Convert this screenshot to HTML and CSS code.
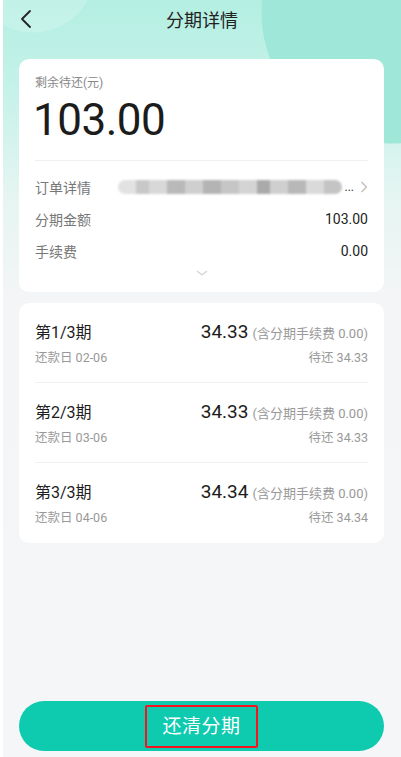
FILE: index.html
```html
<!DOCTYPE html>
<html lang="zh-CN">
<head>
  <meta charset="UTF-8" />
  <meta name="viewport" content="width=device-width, initial-scale=1.0" />
  <title>分期详情</title>
  <link rel="stylesheet" href="styles.css">
</head>
<body>
  <div class="app">
    <div class="header">
      <svg class="back" width="12" height="20" viewBox="0 0 12 20"><path d="M10 2 L2 10 L10 18" fill="none" stroke="#222" stroke-width="1.8" stroke-linecap="round" stroke-linejoin="round"/></svg>
      <h1>分期详情</h1>
    </div>

    <div class="card summary">
      <div class="label">剩余待还(元)</div>
      <div class="amount">103.00</div>
      <div class="divider"></div>
      <div class="row">
        <span class="key">订单详情</span>
        <span class="order">
          <span class="blur"></span>
          <span class="dots">...</span>
          <svg width="8" height="12" viewBox="0 0 8 12"><path d="M1.5 1 L6.5 6 L1.5 11" fill="none" stroke="#bbb" stroke-width="1.2"/></svg>
        </span>
      </div>
      <div class="row"><span class="key">分期金额</span><span class="val">103.00</span></div>
      <div class="row"><span class="key">手续费</span><span class="val">0.00</span></div>
      <div class="more">
        <svg width="14" height="8" viewBox="0 0 14 8"><path d="M2 2 L7 6 L12 2" fill="none" stroke="#d4d4d4" stroke-width="1.2"/></svg>
      </div>
    </div>

    <div class="card plan">
      <div class="term">
        <div class="term-line">
          <span class="term-name">第1/3期</span>
          <span><span class="term-amt">34.33</span> <span class="fee">(含分期手续费 0.00)</span></span>
        </div>
        <div class="term-line sub">
          <span>还款日 02-06</span>
          <span>待还 34.33</span>
        </div>
      </div>
      <div class="term">
        <div class="term-line">
          <span class="term-name">第2/3期</span>
          <span><span class="term-amt">34.33</span> <span class="fee">(含分期手续费 0.00)</span></span>
        </div>
        <div class="term-line sub">
          <span>还款日 03-06</span>
          <span>待还 34.33</span>
        </div>
      </div>
      <div class="term">
        <div class="term-line">
          <span class="term-name">第3/3期</span>
          <span><span class="term-amt">34.34</span> <span class="fee">(含分期手续费 0.00)</span></span>
        </div>
        <div class="term-line sub">
          <span>还款日 04-06</span>
          <span>待还 34.34</span>
        </div>
      </div>
    </div>

    <div class="footer">
      <button class="pay-btn"><span class="mark">还清分期</span></button>
    </div>
  </div>
</body>
</html>
```

FILE: styles.css
```css
body {
  margin: 0;
  background: #fff;
  font-family: Roboto, "Noto Sans CJK SC", "Noto Sans", sans-serif;
  color: #222;
}
.app {
  margin-left: 3px;
  min-height: 757px;
  display: flex;
  flex-direction: column;
  background:
    radial-gradient(circle at 30px -30px, rgba(255,255,255,0.18) 0 62px, transparent 63px),
    radial-gradient(circle at 390px 12px, #9fe8d9 0 131px, transparent 132px),
    linear-gradient(to bottom, #b4efe2 0, #c5f2e9 90px, #e6f5f2 200px, #f4f5f7 300px, #f5f6f8 100%);
}
.header {
  height: 38px;
  display: flex;
  align-items: center;
  justify-content: center;
  position: relative;
}
.header h1 {
  margin: 0;
  font-size: 18px;
  font-weight: 400;
  color: #222;
}
.back {
  position: absolute;
  left: 17px;
  top: 9px;
}
.card {
  background: #fff;
  border-radius: 10px;
  margin: 0 17px 0 16px;
  padding: 0 16px;
}
.summary {
  margin-top: 21px;
  padding-top: 16px;
  padding-bottom: 13px;
}
.label {
  font-size: 12px;
  line-height: 16px;
  color: #888;
}
.amount {
  font-size: 44px;
  line-height: 50px;
  margin-top: 4px;
  margin-left: -2px;
  color: #1c1c1c;
  letter-spacing: -0.5px;
}
.divider {
  height: 1px;
  background: #efefef;
  margin: 15px 0 10px;
}
.row {
  height: 32px;
  display: flex;
  align-items: center;
  justify-content: space-between;
  font-size: 14px;
}
.key {
  color: #777;
}
.val {
  color: #222;
}
.order {
  display: flex;
  align-items: center;
  gap: 3px;
}
.blur {
  width: 224px;
  height: 14px;
  border-radius: 7px;
  filter: blur(0.8px);
  background:
    linear-gradient(to right, #e2e2e2 0 8%, #c8c8c8 8% 14%, #d8d8d8 14% 22%, #b9b9b9 22% 30%, #cfcfcf 30% 38%, #b4b4b4 38% 46%, #c6c6c6 46% 54%, #d4d4d4 54% 62%, #aaaaaa 62% 68%, #cfcfcf 68% 76%, #b8b8b8 76% 84%, #dadada 84% 92%, #c4c4c4 92% 100%);
}
.dots {
  color: #333;
  font-size: 12px;
  margin-right: 3px;
}
.more {
  height: 12px;
  display: flex;
  justify-content: center;
  align-items: center;
}
.plan {
  margin-top: 11px;
}
.term {
  height: 80px;
  box-sizing: border-box;
  padding-top: 18px;
  border-bottom: 1px solid #f0f0f0;
}
.term:last-child {
  border-bottom: none;
}
.term-line {
  display: flex;
  justify-content: space-between;
  align-items: baseline;
  line-height: 22px;
}
.term-name {
  font-size: 16px;
  color: #1c1c1c;
}
.term-amt {
  font-size: 19px;
  color: #1c1c1c;
}
.fee {
  font-size: 13px;
  color: #999;
}
.sub {
  margin-top: 5px;
  line-height: 16px;
  font-size: 12.5px;
  color: #999;
}
.footer {
  margin-top: auto;
  padding: 0 17px 6px 16px;
}
.pay-btn {
  width: 100%;
  height: 50px;
  border: none;
  border-radius: 25px;
  background: #0ecaaf;
  display: flex;
  align-items: center;
  justify-content: center;
  font-family: inherit;
}
.mark {
  display: inline-block;
  border: 2px solid #f5141e;
  border-radius: 2px;
  padding: 8px 15px;
  line-height: 23px;
  font-size: 19px;
  color: #fff;
  letter-spacing: 0.5px;
}
```
